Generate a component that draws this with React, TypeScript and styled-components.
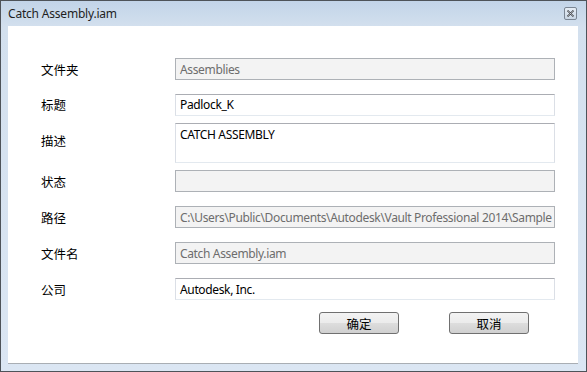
import React from "react";
import styled, { createGlobalStyle } from "styled-components";

const Global = createGlobalStyle`
  html, body { margin: 0; padding: 0; background: #ffffff; }
  body { font-family: "Noto Sans", "Noto Sans CJK SC", sans-serif; }
  * { box-sizing: border-box; }
`;

const Window = styled.div`
  width: 587px;
  height: 372px;
  border: 1px solid #4e5359;
  background: linear-gradient(to bottom, #c2d4e8 0px, #d3e0ee 26px, #dbe6f3 100%);
  display: flex;
  flex-direction: column;
`;

const TitleBar = styled.div`
  height: 25px;
  display: flex;
  align-items: center;
  justify-content: space-between;
  padding: 0 9px 0 7px;
`;

const Title = styled.span`
  font-family: "Noto Sans", sans-serif;
  font-size: 12px;
  color: #1e1e1e;
  letter-spacing: -0.2px;
`;

const CloseButton = styled.div`
  width: 13px;
  height: 13px;
  border: 1px solid #7b8694;
  border-radius: 2px;
  background: linear-gradient(to bottom, #e6edf5, #c9d6e4);
  display: flex;
  align-items: center;
  justify-content: center;
`;

const Content = styled.div`
  margin: 0 8px 7px 7px;
  flex: 1;
  background: #ffffff;
  border-bottom: 1px solid #a9aeb4;
  padding: 25px 0 0 33px;
`;

const Form = styled.div`
  display: grid;
  grid-template-columns: 134px 380px;
  grid-template-rows: 36px 35px 41px 36px 36px 36px 36px;
  align-items: center;
`;

const Label = styled.div<{ $shift?: number }>`
  font-family: "Noto Sans CJK SC", sans-serif;
  font-size: 12.5px;
  color: #000000;
  align-self: center;
  margin-top: ${(p) => p.$shift ?? 0}px;
`;

const Field = styled.div<{ $disabled?: boolean; $tall?: boolean }>`
  height: ${(p) => (p.$tall ? 40 : 22)}px;
  border: 1px solid;
  border-color: ${(p) =>
    p.$disabled ? "#adb1b6" : "#abadb3 #dbdfe6 #e3e9ef #dbdfe6"};
  background: ${(p) => (p.$disabled ? "#f3f3f3" : "#ffffff")};
  color: ${(p) => (p.$disabled ? "#6d6d6d" : "#000000")};
  font-family: "Noto Sans", sans-serif;
  font-size: 12px;
  letter-spacing: -0.35px;
  padding: ${(p) => (p.$tall ? "2px 4px" : "0 4px")};
  display: flex;
  align-items: ${(p) => (p.$tall ? "flex-start" : "center")};
  white-space: nowrap;
  overflow: hidden;
`;

const Buttons = styled.div`
  display: flex;
  gap: 50px;
  margin: 5px 0 0 278px;
`;

const Button = styled.div`
  width: 80px;
  height: 22px;
  border: 1px solid #707070;
  border-radius: 3px;
  background: linear-gradient(to bottom, #f3f3f3 0%, #ebebeb 50%, #dddddd 51%, #d0d0d0 100%);
  display: flex;
  align-items: center;
  justify-content: center;
  font-family: "Noto Sans CJK SC", sans-serif;
  font-size: 12.5px;
  color: #000000;
`;

const rows: { label: string; value: string; disabled?: boolean; tall?: boolean; shift?: number }[] = [
  { label: "文件夹", value: "Assemblies", disabled: true },
  { label: "标题", value: "Padlock_K" },
  { label: "描述", value: "CATCH ASSEMBLY", tall: true, shift: -4 },
  { label: "状态", value: "", disabled: true },
  { label: "路径", value: "C:\\Users\\Public\\Documents\\Autodesk\\Vault Professional 2014\\Sample", disabled: true },
  { label: "文件名", value: "Catch Assembly.iam", disabled: true },
  { label: "公司", value: "Autodesk, Inc." },
];

export default function App() {
  return (
    <>
      <Global />
      <Window>
        <TitleBar>
          <Title>Catch Assembly.iam</Title>
          <CloseButton>
            <svg width="9" height="9" viewBox="0 0 9 9">
              <path d="M1.5 1.5 L7.5 7.5 M7.5 1.5 L1.5 7.5" stroke="#2b2f36" strokeWidth="1.6" />
              <path d="M1.5 1.5 L7.5 7.5 M7.5 1.5 L1.5 7.5" stroke="#ffffff" strokeWidth="0.5" />
            </svg>
          </CloseButton>
        </TitleBar>
        <Content>
          <Form>
            {rows.map((r) => (
              <React.Fragment key={r.label}>
                <Label $shift={r.shift}>{r.label}</Label>
                <Field $disabled={r.disabled} $tall={r.tall}>
                  {r.value}
                </Field>
              </React.Fragment>
            ))}
          </Form>
          <Buttons>
            <Button>确定</Button>
            <Button>取消</Button>
          </Buttons>
        </Content>
      </Window>
    </>
  );
}
